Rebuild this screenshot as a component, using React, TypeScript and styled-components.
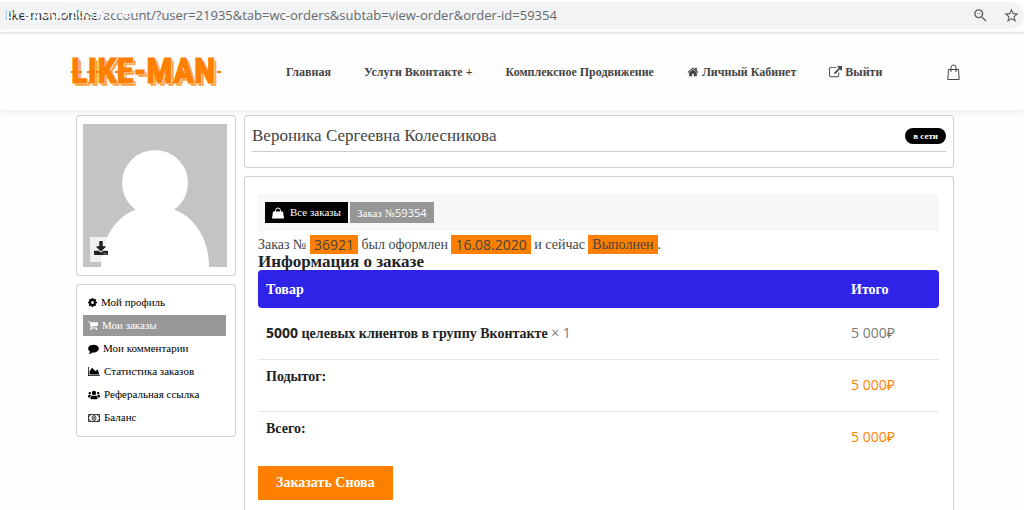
import React from "react";
import styled, { createGlobalStyle } from "styled-components";
import { FaDownload, FaUsers } from "react-icons/fa";
import { MdStarBorder, MdZoomOut } from "react-icons/md";

const serif = '"Liberation Serif", "Times New Roman", serif';
const sans = '"Open Sans", "Noto Sans", sans-serif';
const orange = "#ff7f00";

const GlobalStyle = createGlobalStyle`
  *, *::before, *::after { box-sizing: border-box; }
  body { margin: 0; background: #fefefe; color: #444; font-family: ${serif}; }
  h1, h2, p, ul { margin: 0; padding: 0; }
  ul { list-style: none; }
  a { color: inherit; text-decoration: none; }
  button { font-family: inherit; border: 0; cursor: pointer; }
`;

const Page = styled.div`
  min-height: 100vh;
  display: flex;
  flex-direction: column;
`;

const BrowserBar = styled.div`
  position: relative;
  display: flex;
  align-items: center;
  gap: 14px;
  height: 27px;
  margin-top: 2px;
  padding: 0 4px 0 5px;
  border-radius: 0 14px 14px 0;
  background: #f1f3f4;
  color: #5f6368;
`;

const Address = styled.div`
  flex: 1;
  font: 13px/27px ${sans};
  white-space: nowrap;
  overflow: hidden;
  color: #666a6e;
`;

const Host = styled.span`
  color: #26282b;
`;

const BarButton = styled.button`
  display: flex;
  padding: 0;
  background: none;
  color: #5f6368;
`;

const Watermark = styled.span`
  position: absolute;
  left: 5px;
  top: 4px;
  font: 15px/18px "Liberation Mono", monospace;
  color: #fff;
`;

const Header = styled.header`
  display: flex;
  align-items: center;
  height: 78px;
  margin-top: 3px;
  padding: 0 64px 0 71px;
  border-top: 2px solid #e9eaeb;
  box-shadow: 0 2px 6px rgba(0, 0, 0, 0.08);
`;

const Logo = styled.a`
  position: relative;
  display: flex;
  width: 152px;
  margin-right: 63px;
`;

const Nav = styled.nav`
  display: flex;
  gap: 33px;
  flex: 1;
`;

const NavLink = styled.a`
  display: flex;
  align-items: center;
  gap: 3px;
  font: bold 12px/18px ${serif};
  color: #444;
  white-space: nowrap;
`;

const CartLink = styled.a`
  display: flex;
`;

const Columns = styled.main`
  flex: 1;
  display: flex;
  gap: 8px;
  padding: 5px 70px 0 76px;
`;

const Sidebar = styled.aside`
  width: 160px;
  display: flex;
  flex-direction: column;
  gap: 8px;
`;

const Content = styled.section`
  flex: 1;
  min-width: 0;
  display: flex;
  flex-direction: column;
  gap: 8px;
`;

const Card = styled.div`
  border: 1px solid #d0d0d0;
  border-radius: 3px;
  background: #fff;
`;

const AvatarCard = styled(Card)`
  position: relative;
  padding: 8px 6px;
  height: 161px;
`;

const AvatarPicture = styled.svg`
  display: block;
  width: 144px;
  height: 143px;
`;

const DownloadButton = styled.button`
  position: absolute;
  left: 13px;
  bottom: 13px;
  display: flex;
  align-items: center;
  justify-content: center;
  width: 22px;
  height: 25px;
  padding: 0 0 3px;
  background: rgba(255, 255, 255, 0.75);
  color: #222;
`;

const MenuCard = styled(Card)`
  padding: 7px 9px 8px 6px;
`;

const Menu = styled.ul`
  display: flex;
  flex-direction: column;
  gap: 2px;
`;

const MenuLink = styled.a<{ $active?: boolean }>`
  display: flex;
  align-items: center;
  gap: 4px;
  height: 21px;
  padding: 0 5px;
  font: 11px/21px ${serif};
  white-space: nowrap;
  color: ${(p) => (p.$active ? "#fff" : "#000")};
  background: ${(p) => (p.$active ? "#989898" : "transparent")};
`;

const NameCard = styled(Card)`
  height: 53px;
  padding: 5px 7px;
`;

const NameRow = styled.div`
  display: flex;
  align-items: center;
  justify-content: space-between;
  height: 31px;
  border-bottom: 1px solid #ccc;
`;

const UserName = styled.h1`
  font: 17px/24px ${serif};
  color: #444;
`;

const OnlineBadge = styled.span`
  padding: 0 8px;
  border-radius: 8px;
  background: #000;
  color: #fff;
  font: bold 9px/16px ${serif};
`;

const OrderCard = styled(Card)`
  flex: 1;
  border-bottom: 0;
  border-radius: 3px 3px 0 0;
  padding: 17px 14px 10px 13px;
`;

const Tabs = styled.div`
  display: flex;
  align-items: center;
  gap: 2px;
  height: 37px;
  padding: 0 7px;
  background: #f6f8f8;
`;

const Tab = styled.a<{ $muted?: boolean }>`
  display: flex;
  align-items: center;
  gap: 6px;
  height: 21px;
  padding: 0 7px;
  font: 11px/21px ${serif};
  color: #fff;
  background: ${(p) => (p.$muted ? "#969696" : "#000")};
`;

const Digits = styled.span`
  font-family: ${sans};
`;

const Summary = styled.p`
  margin-top: 4px;
  font: 14px/19px ${serif};
  color: #444;
`;

const Mark = styled.mark<{ $digits?: boolean }>`
  display: inline-block;
  height: 19px;
  padding: 0 4px;
  vertical-align: top;
  background: ${orange};
  color: #444;
  font-family: ${(p) => (p.$digits ? sans : serif)};
`;

const Title = styled.h2`
  font: bold 17px/16px ${serif};
  color: #222;
`;

const OrderTable = styled.table`
  width: 100%;
  border-collapse: separate;
  border-spacing: 0;
  font: 14px/20px ${serif};
`;

const HeadCell = styled.th<{ $last?: boolean }>`
  height: 38px;
  width: ${(p) => (p.$last ? "96px" : "auto")};
  padding: 2px 8px 0;
  text-align: left;
  color: #fff;
  background: #3023e8;
  border-radius: ${(p) => (p.$last ? "0 4px 4px 0" : "4px 0 0 4px")};
`;

const ProductCell = styled.td`
  height: 52px;
  padding: 0 8px;
  color: #777;
  border-bottom: 1px solid #e4e4e4;
`;

const Product = styled.a`
  font-weight: bold;
  color: #222;
`;

const TotalLabel = styled.th<{ $end?: boolean }>`
  height: 52px;
  padding: 7px 8px;
  text-align: left;
  vertical-align: top;
  color: #222;
  border-bottom: ${(p) => (p.$end ? "0" : "1px solid #e4e4e4")};
`;

const Price = styled.td<{ $accent?: boolean; $line?: boolean }>`
  padding: 0 8px 2px;
  font-family: ${sans};
  color: ${(p) => (p.$accent ? orange : "#777")};
  border-bottom: ${(p) => (p.$line ? "1px solid #e4e4e4" : "0")};
`;

const ReorderButton = styled.button`
  height: 34px;
  margin-top: 2px;
  padding: 0 18px;
  background: ${orange};
  color: #fff;
  font: bold 14px/34px ${serif};
`;

const icons = {
  home: ["0 0 1792 1792", "M1472 992v480q0 26-19 45t-45 19h-384v-384h-256v384h-384q-26 0-45-19t-19-45v-480q0-1 .5-3t.5-3l575-474 575 474q1 2 1 6zm223-69l-62 74q-8 9-21 11h-3q-13 0-21-7l-692-577-692 577q-12 8-24 7-13-2-21-11l-62-74q-8-10-7-23.5t11-21.5l719-599q32-26 76-26t76 26l244 204v-195q0-14 9-23t23-9h192q14 0 23 9t9 23v408l219 182q10 8 11 21.5t-7 23.5z"],
  exit: ["0 0 1792 1792", "M1408 928v320q0 119-84.5 203.5t-203.5 84.5h-832q-119 0-203.5-84.5t-84.5-203.5v-832q0-119 84.5-203.5t203.5-84.5h704q14 0 23 9t9 23v64q0 14-9 23t-23 9h-704q-66 0-113 47t-47 113v832q0 66 47 113t113 47h832q66 0 113-47t47-113v-320q0-14 9-23t23-9h64q14 0 23 9t9 23zm384-864v512q0 26-19 45t-45 19-45-19l-176-176-652 652q-10 10-23 10t-23-10l-114-114q-10-10-10-23t10-23l652-652-176-176q-19-19-19-45t19-45 45-19h512q26 0 45 19t19 45z"],
  cog: ["128 128 1536 1536", "M1152 896q0-106-75-181t-181-75-181 75-75 181 75 181 181 75 181-75 75-181zm512-109v222q0 12-8 23t-20 13l-185 28q-19 54-39 91 35 50 107 138 10 12 10 25t-9 23q-27 37-99 108t-94 71q-12 0-26-9l-138-108q-44 23-91 38-16 136-29 186-7 28-36 28h-222q-14 0-24.5-8.5t-11.5-21.5l-28-184q-49-16-90-37l-141 107q-10 9-25 9-14 0-25-11-126-114-165-168-7-10-7-23 0-12 8-23 15-21 51-66.5t54-70.5q-27-50-41-99l-183-27q-13-2-21-12.5t-8-23.5v-222q0-12 8-23t19-13l186-28q14-46 39-92-40-57-107-138-10-12-10-24 0-10 9-23 26-36 98.5-107.5t94.5-71.5q13 0 26 10l138 107q44-23 91-38 16-136 29-186 7-28 36-28h222q14 0 24.5 8.5t11.5 21.5l28 184q49 16 90 37l142-107q9-9 24-9 13 0 25 10 129 119 165 170 7 8 7 22 0 12-8 23-15 21-51 66.5t-54 70.5q26 50 41 98l183 28q13 2 21 12.5t8 23.5z"],
  cart: ["64 192 1664 1472", "M704 1536q0 52-38 90t-90 38-90-38-38-90 38-90 90-38 90 38 38 90zm896 0q0 52-38 90t-90 38-90-38-38-90 38-90 90-38 90 38 38 90zm128-1088v512q0 24-16.5 42.5t-40.5 21.5l-1044 122q13 60 13 70 0 16-24 64h920q26 0 45 19t19 45-19 45-45 19h-1024q-26 0-45-19t-19-45q0-11 8-31.5t16-36 21.5-40 15.5-29.5l-177-823h-204q-26 0-45-19t-19-45 19-45 45-19h256q16 0 28.5 6.5t19.5 15.5 13 24.5 8 26 5.5 29.5 4.5 26h1201q26 0 45 19t19 45z"],
  comment: ["0 128 1792 1664", "M1792 896q0 174-120 321.5t-326 233-450 85.5q-70 0-145-8-198 175-460 242-49 14-114 22h-5q-15 0-27-10.5t-16-27.5v-1q-3-4-.5-12t2-10 4.5-9.5l6-9 7-8.5 8-9q7-8 31-34.5t34.5-38 31-39.5 32.5-51 27-59 26-76q-157-89-247.5-220t-90.5-281q0-174 120-321.5t326-233 450-85.5 450 85.5 326 233 120 321.5z"],
  chart: ["0 128 2048 1536", "M2048 1536v128h-2048v-1536h128v1408h1920zm-384-1024l256 896h-1664v-576l448-576 576 576z"],
} as const;

function Icon({ name, width, height }: { name: keyof typeof icons; width: number; height: number }) {
  const [box, d] = icons[name];
  return (
    <svg width={width} height={height} viewBox={box} fill="currentColor" aria-hidden="true">
      <path d={d} />
    </svg>
  );
}

const Banknote = () => (
  <svg width="12" height="8" viewBox="0 0 24 16" fill="none" stroke="currentColor" strokeWidth="2" aria-hidden="true">
    <path d="M1 1h22v14H1zM1 5a4 4 0 0 0 4-4M19 1a4 4 0 0 0 4 4M1 11a4 4 0 0 1 4 4M19 15a4 4 0 0 1 4-4" strokeWidth="1.5" />
    <ellipse cx="12" cy="8" rx="4" ry="5" strokeWidth="1.5" />
    <path d="M12 5v6" />
  </svg>
);

const BagSolid = () => (
  <svg width="12" height="12" viewBox="0 0 24 24" aria-hidden="true">
    <path d="M2 9h20l2 14H0z" fill="currentColor" />
    <path d="M7 12V7a5 5 0 0 1 10 0v5" fill="none" stroke="currentColor" strokeWidth="2" />
  </svg>
);

const BagOutline = () => (
  <svg width="13" height="17" viewBox="0 0 13 17" fill="none" stroke="#444" aria-hidden="true">
    <path d="M1.5 5.5h10l.7 10H.8z" />
    <path d="M4 8V3.5a2.5 2.5 0 0 1 5 0V8" />
  </svg>
);

const Wordmark = styled.span`
  font: bold 35px/36px "Roboto Condensed", Roboto, sans-serif;
  white-space: nowrap;
  color: ${orange};
  -webkit-text-stroke: 1px ${orange};
  text-shadow: 1px 1px 0 #fff, 2px 2px 0 #ff9a35, 3px 3px 0 #ffb469;
`;

/* Small spurs that stick out of the letters at mid height. */
const Spurs = styled.svg`
  position: absolute;
  left: 0;
  top: 0;
`;

const spurs = [0, 7, 16, 25, 44, 85, 109, 127, 146];

const menu: { label: string; icon: React.ReactNode; active?: boolean }[] = [
  { label: "Мой профиль", icon: <Icon name="cog" width={9} height={9} /> },
  { label: "Мои заказы", icon: <Icon name="cart" width={10} height={9} />, active: true },
  { label: "Мои комментарии", icon: <Icon name="comment" width={11} height={10} /> },
  { label: "Статистика заказов", icon: <Icon name="chart" width={12} height={9} /> },
  { label: "Реферальная ссылка", icon: <FaUsers size={12} /> },
  { label: "Баланс", icon: <Banknote /> },
];

export default function App() {
  return (
    <Page>
      <GlobalStyle />
      <BrowserBar>
        <Address>
          <Host>like-man.online</Host>/account/?user=21935&amp;tab=wc-orders&amp;subtab=view-order&amp;order-id=59354
        </Address>
        <BarButton aria-label="Масштаб"><MdZoomOut size={17} /></BarButton>
        <BarButton aria-label="Закладка"><MdStarBorder size={17} /></BarButton>
        <Watermark>pravogolosa.net</Watermark>
      </BrowserBar>

      <Header>
        <Logo href="#">
          <Wordmark>LIKE-MAN</Wordmark>
          <Spurs width="152" height="36" viewBox="0 0 152 36" stroke={orange} strokeWidth="2" aria-hidden="true">
            {spurs.map((x) => (
              <path key={x} d={`M${x} 18h4`} />
            ))}
          </Spurs>
        </Logo>
        <Nav>
          <NavLink href="#">Главная</NavLink>
          <NavLink href="#">Услуги Вконтакте +</NavLink>
          <NavLink href="#">Комплексное Продвижение</NavLink>
          <NavLink href="#"><Icon name="home" width={12} height={12} />Личный Кабинет</NavLink>
          <NavLink href="#"><Icon name="exit" width={13} height={13} />Выйти</NavLink>
        </Nav>
        <CartLink href="#" aria-label="Корзина"><BagOutline /></CartLink>
      </Header>

      <Columns>
        <Sidebar>
          <AvatarCard>
            <AvatarPicture viewBox="0 0 144 143" role="img" aria-label="Аватар">
              <rect width="144" height="143" fill="#c4c4c4" />
              <circle cx="72" cy="59" r="33" fill="#fff" />
              <path d="M18 143C18 108 40 82 72 82s54 26 54 61z" fill="#fff" />
            </AvatarPicture>
            <DownloadButton aria-label="Загрузить"><FaDownload size={14} /></DownloadButton>
          </AvatarCard>
          <MenuCard>
            <Menu>
              {menu.map((m) => (
                <li key={m.label}>
                  <MenuLink href="#" $active={m.active}>{m.icon}{m.label}</MenuLink>
                </li>
              ))}
            </Menu>
          </MenuCard>
        </Sidebar>

        <Content>
          <NameCard>
            <NameRow>
              <UserName>Вероника Сергеевна Колесникова</UserName>
              <OnlineBadge>в сети</OnlineBadge>
            </NameRow>
          </NameCard>
          <OrderCard>
            <Tabs>
              <Tab href="#"><BagSolid />Все заказы</Tab>
              <Tab href="#" $muted><span>Заказ №<Digits>59354</Digits></span></Tab>
            </Tabs>
            <Summary>
              Заказ № <Mark $digits>36921</Mark> был оформлен <Mark $digits>16.08.2020</Mark> и сейчас <Mark>Выполнен</Mark>.
            </Summary>
            <Title>Информация о заказе</Title>
            <OrderTable>
              <thead>
                <tr>
                  <HeadCell>Товар</HeadCell>
                  <HeadCell $last>Итого</HeadCell>
                </tr>
              </thead>
              <tbody>
                <tr>
                  <ProductCell>
                    <Product href="#"><Digits>5000</Digits> целевых клиентов в группу Вконтакте</Product> <Digits>× 1</Digits>
                  </ProductCell>
                  <Price $line>5 000₽</Price>
                </tr>
                <tr>
                  <TotalLabel>Подытог:</TotalLabel>
                  <Price $accent $line>5 000₽</Price>
                </tr>
                <tr>
                  <TotalLabel $end>Всего:</TotalLabel>
                  <Price $accent>5 000₽</Price>
                </tr>
              </tbody>
            </OrderTable>
            <ReorderButton>Заказать Снова</ReorderButton>
          </OrderCard>
        </Content>
      </Columns>
    </Page>
  );
}
